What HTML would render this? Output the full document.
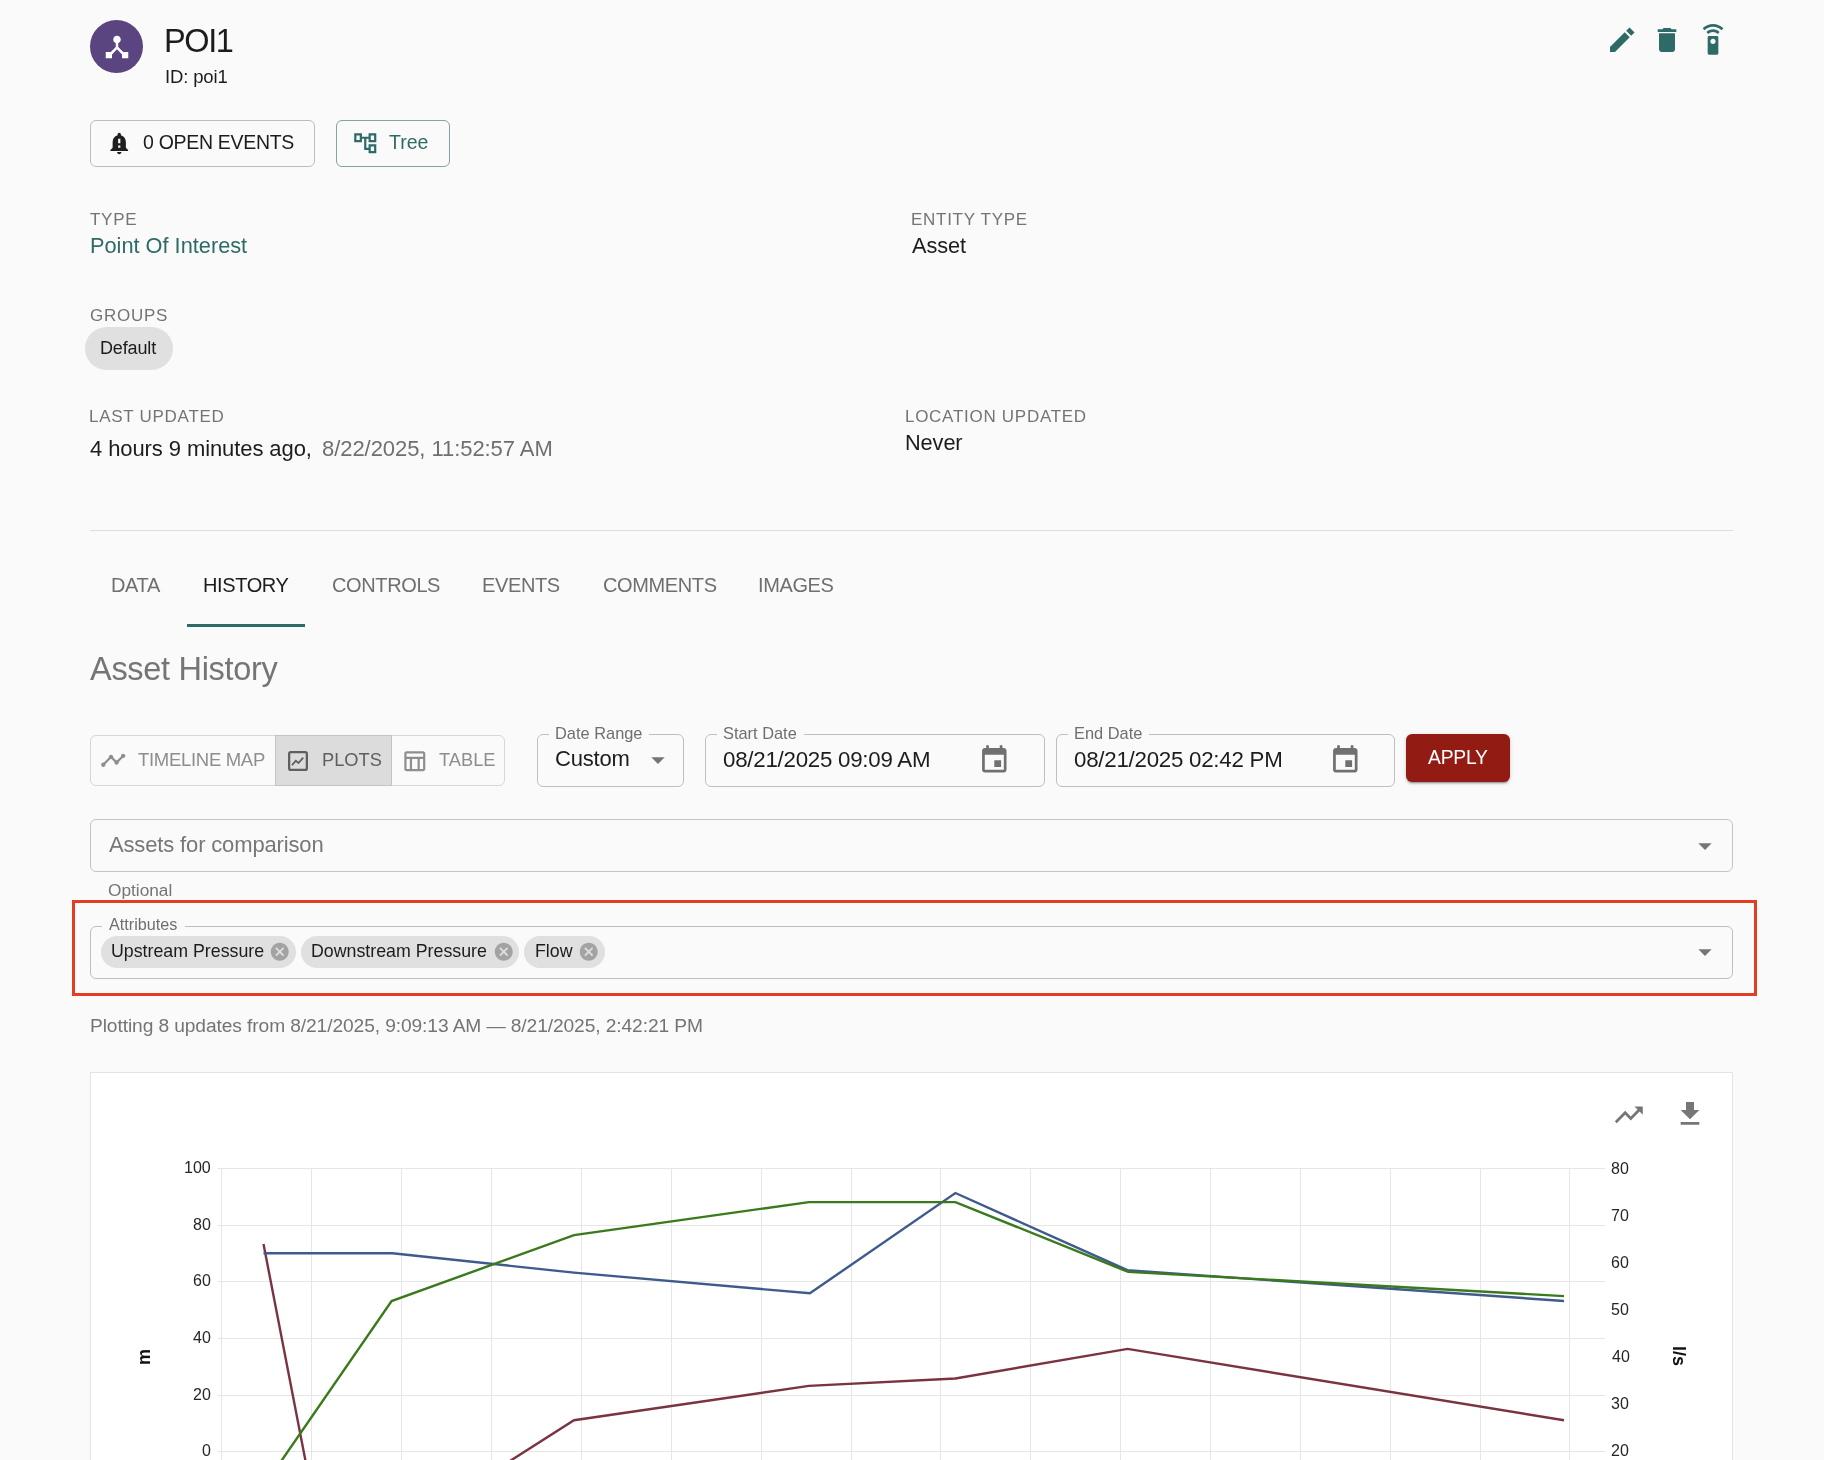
<!DOCTYPE html>
<html><head><meta charset="utf-8"><style>
html,body{margin:0;padding:0;background:#fafafa;width:1824px;height:1460px;overflow:hidden;position:relative;font-family:"Liberation Sans",sans-serif}
.t{position:absolute;will-change:transform;white-space:nowrap;line-height:1;font-family:"Liberation Sans",sans-serif}
.box{position:absolute;border:1px solid #c4c4c4;box-sizing:border-box}
</style></head><body>
<div style="position:absolute;left:90px;top:20px;width:53px;height:53px;border-radius:50%;background:#5b4580"></div><svg style="position:absolute;left:101.5px;top:31.5px" width="30" height="30" viewBox="0 0 24 24"><path fill="#fff" d="M17 16l-4-4V8.82C14.16 8.4 15 7.3 15 6c0-1.66-1.34-3-3-3S9 4.34 9 6c0 1.3.84 2.4 2 2.82V12l-4 4H3v5h5v-3.05l4-4.2 4 4.2V21h5v-5h-4z"/></svg><div class="t" style="left:163.93px;top:25.08px;font-size:32.5px;letter-spacing:-1.4px;color:#1c1c1c;">POI1</div>
<div class="t" style="left:164.89px;top:67.84px;font-size:18.5px;letter-spacing:-0.15px;color:#1c1c1c;">ID: poi1</div>
<svg style="position:absolute;left:1606px;top:24px" width="32" height="32" viewBox="0 0 24 24"><path fill="#2f6b66" d="M3 17.25V21h3.75L17.81 9.94l-3.75-3.75L3 17.25zM21.41 6.34l-3.75-3.75-2.53 2.54 3.75 3.75 2.53-2.54z"/></svg><svg style="position:absolute;left:1651px;top:24px" width="32" height="32" viewBox="0 0 24 24"><path fill="#2f6b66" d="M6 19c0 1.1.9 2 2 2h8c1.1 0 2-.9 2-2V7H6v12zM19 4h-3.5l-1-1h-5l-1 1H5v2h14V4z"/></svg><svg style="position:absolute;left:1697px;top:24px" width="32" height="32" viewBox="0 0 24 24"><path fill="#2f6b66" d="M15 9H9c-.55 0-1 .45-1 1v12c0 .55.45 1 1 1h6c.55 0 1-.45 1-1V10c0-.55-.45-1-1-1zm-3 6c-1.1 0-2-.9-2-2s.9-2 2-2 2 .9 2 2-.9 2-2 2zM7.05 6.05l1.41 1.41C9.37 6.56 10.62 6 12 6s2.63.56 3.54 1.46l1.41-1.41C15.68 4.78 13.93 4 12 4s-3.68.78-4.95 2.05zM12 0C8.96 0 6.21 1.23 4.22 3.22l1.41 1.41C7.26 3.01 9.51 2 12 2s4.74 1.01 6.36 2.64l1.41-1.41C17.790 1.23 15.04 0 12 0z"/></svg><div class="box" style="left:90px;top:120px;width:225px;height:47px;border-color:#bdbdbd;border-radius:6px"></div><svg style="position:absolute;left:106px;top:129.8px" width="26.5" height="26.5" viewBox="0 0 24 24"><path fill="#1f1f1f" d="M18 16v-5c0-3.07-1.64-5.64-4.5-6.32V4c0-.83-.67-1.5-1.5-1.5s-1.5.67-1.5 1.5v.68C7.630 5.36 6 7.92 6 11v5l-2 2v1h16v-1l-2-2zm-5 0h-2v-2h2v2zm0-4h-2V8h2v4zm-1 10c1.1 0 2-.9 2-2h-4c0 1.1.89 2 2 2z"/></svg><div class="t" style="left:142.84px;top:132.99px;font-size:19.5px;letter-spacing:-0.3px;color:#1c1c1c;">0 OPEN EVENTS</div>
<div class="box" style="left:336px;top:120px;width:114px;height:47px;border-color:#7fa5a1;border-radius:6px"></div><svg style="position:absolute;left:352px;top:130px" width="26.5" height="26.5" viewBox="0 0 24 24"><path fill="#2f6b66" d="M22 11V3h-7v3H9V3H2v8h7V8h2v10h4v3h7v-8h-7v3h-2V8h2v3h7zM7 9H4V5h3v4zm10 6h3v4h-3v-4zm0-10h3v4h-3V5z"/></svg><div class="t" style="left:389.06px;top:132.89px;font-size:19.5px;color:#2f6b66;">Tree</div>
<div class="t" style="left:89.92px;top:211.21px;font-size:17px;letter-spacing:0.72px;color:#747474;">TYPE</div>
<div class="t" style="left:89.82px;top:235.48px;font-size:21.75px;color:#2f6b66;">Point Of Interest</div>
<div class="t" style="left:910.61px;top:211.21px;font-size:17px;letter-spacing:0.72px;color:#747474;">ENTITY TYPE</div>
<div class="t" style="left:911.76px;top:235.08px;font-size:21.75px;letter-spacing:-0.1px;color:#1c1c1c;">Asset</div>
<div class="t" style="left:89.65px;top:307.21px;font-size:17px;letter-spacing:0.72px;color:#747474;">GROUPS</div>
<div style="position:absolute;left:85px;top:327px;width:88px;height:43px;border-radius:21.5px;background:#e0e0e0"></div><div class="t" style="left:100.22px;top:339.36px;font-size:18px;letter-spacing:-0.15px;color:#1c1c1c;">Default</div>
<div class="t" style="left:88.91px;top:408.41px;font-size:17px;letter-spacing:0.72px;color:#747474;">LAST UPDATED</div>
<div class="t" style="left:89.80px;top:438.37px;font-size:22px;letter-spacing:-0.09px;color:#1c1c1c;">4 hours 9 minutes ago,</div>
<div class="t" style="left:321.64px;top:438.37px;font-size:22px;letter-spacing:-0.06px;color:#6f6f6f;">8/22/2025, 11:52:57 AM</div>
<div class="t" style="left:905.11px;top:408.01px;font-size:17px;letter-spacing:0.72px;color:#747474;">LOCATION UPDATED</div>
<div class="t" style="left:905.12px;top:432.08px;font-size:21.75px;letter-spacing:-0.1px;color:#1c1c1c;">Never</div>
<div style="position:absolute;left:90px;top:530px;width:1643px;height:1px;background:#dedede"></div><div class="t" style="left:110.66px;top:574.77px;font-size:20px;letter-spacing:-0.38px;color:#6f6f6f;">DATA</div>
<div class="t" style="left:202.66px;top:574.77px;font-size:20px;letter-spacing:-0.38px;color:#1c1c1c;">HISTORY</div>
<div class="t" style="left:331.58px;top:574.77px;font-size:20px;letter-spacing:-0.38px;color:#6f6f6f;">CONTROLS</div>
<div class="t" style="left:482.16px;top:574.77px;font-size:20px;letter-spacing:-0.38px;color:#6f6f6f;">EVENTS</div>
<div class="t" style="left:602.58px;top:574.77px;font-size:20px;letter-spacing:-0.38px;color:#6f6f6f;">COMMENTS</div>
<div class="t" style="left:758.05px;top:574.77px;font-size:20px;letter-spacing:-0.38px;color:#6f6f6f;">IMAGES</div>
<div style="position:absolute;left:187px;top:624px;width:118px;height:3px;background:#2f6b66"></div><div class="t" style="left:90.44px;top:653.48px;font-size:32.5px;letter-spacing:-0.3px;color:#757575;">Asset History</div>
<div class="box" style="left:90px;top:735px;width:415px;height:51px;border-color:#d6d6d6;border-radius:6px"></div><div style="position:absolute;left:275px;top:735px;width:117px;height:51px;background:#dcdcdc;border:1px solid #c4c4c4;box-sizing:border-box"></div><svg style="position:absolute;left:100.2px;top:747.2px" width="26.5" height="26.5" viewBox="0 0 24 24"><path fill="#8e8e8e" d="M23 8c0 1.1-.9 2-2 2-.18 0-.35-.02-.51-.07l-3.56 3.55c.05.16.07.34.07.52 0 1.1-.9 2-2 2s-2-.9-2-2c0-.18.02-.36.07-.52l-2.55-2.55c-.16.05-.34.07-.52.07s-.36-.02-.52-.07l-4.55 4.56c.05.16.07.33.07.51 0 1.1-.9 2-2 2s-2-.9-2-2 .9-2 2-2c.18 0 .35.02.51.07l4.56-4.55C8.02 9.36 8 9.18 8 9c0-1.1.9-2 2-2s2 .9 2 2c0 .18-.02.36-.07.52l2.55 2.55c.16-.05.34-.07.52-.07s.36.02.52.07l3.55-3.56C19.02 8.35 19 8.18 19 8c0-1.1.9-2 2-2s2 .9 2 2z"/></svg><div class="t" style="left:137.58px;top:750.64px;font-size:18.5px;letter-spacing:-0.3px;color:#8e8e8e;">TIMELINE MAP</div>
<svg style="position:absolute;left:288.3px;top:751.2px" width="20" height="20" viewBox="0 0 21 21"><rect x="1.2" y="1.2" width="18.6" height="18.6" rx="1.8" fill="none" stroke="#5f5f5f" stroke-width="2.4"/><polyline points="4.2,14.8 8.2,10.2 11,12.6 16,7" fill="none" stroke="#5f5f5f" stroke-width="1.9"/></svg><div class="t" style="left:322.20px;top:750.61px;font-size:18.3px;color:#5f5f5f;">PLOTS</div>
<svg style="position:absolute;left:400.5px;top:747.5px" width="26.5" height="26.5" viewBox="0 0 24 24"><path fill="#8e8e8e" d="M20 3H5c-1.1 0-2 .9-2 2v14c0 1.1.9 2 2 2h15c1.1 0 2-.9 2-2V5c0-1.1-.9-2-2-2zm0 2v3H5V5h15zm-5 14h-5v-9h5v9zM5 10h3v9H5v-9zm12 9v-9h3v9h-3z"/></svg><div class="t" style="left:438.59px;top:750.61px;font-size:18.3px;color:#8e8e8e;">TABLE</div>
<div class="box" style="left:537px;top:734.3px;width:147px;height:52.5px;border-color:#bfbfbf;border-radius:6px"></div><div style="position:absolute;left:549px;top:733.3px;width:100px;height:4px;background:#fafafa"></div><div class="t" style="left:555.25px;top:725.31px;font-size:16.4px;color:#6f6f6f;">Date Range</div>
<div class="t" style="left:555.28px;top:748.37px;font-size:22px;letter-spacing:-0.2px;color:#1c1c1c;">Custom</div>
<svg style="position:absolute;left:641.9px;top:743.6px" width="32" height="32" viewBox="0 0 24 24"><path fill="#767676" d="M7 10l5 5 5-5z"/></svg><div class="box" style="left:705px;top:734.3px;width:340px;height:52.5px;border-color:#bfbfbf;border-radius:6px"></div><div style="position:absolute;left:716.7px;top:733.3px;width:87.29999999999995px;height:4px;background:#fafafa"></div><div class="t" style="left:723.46px;top:725.31px;font-size:16.4px;color:#6f6f6f;">Start Date</div>
<div class="t" style="left:723.33px;top:748.62px;font-size:22.3px;letter-spacing:-0.25px;color:#1c1c1c;">08/21/2025 09:09 AM</div>
<svg style="position:absolute;left:977.7px;top:744.4px" width="32.6" height="32.6" viewBox="0 0 24 24"><path fill="#707070" d="M17 12h-5v5h5v-5zM16 1v2H8V1H6v2H5c-1.11 0-1.99.9-1.99 2L3 19c0 1.1.89 2 2 2h14c1.1 0 2-.9 2-2V5c0-1.1-.9-2-2-2h-1V1h-2zm3 18H5V8h14v11z"/></svg><div class="box" style="left:1056px;top:734.3px;width:339px;height:52.5px;border-color:#bfbfbf;border-radius:6px"></div><div style="position:absolute;left:1067.5px;top:733.3px;width:81.5px;height:4px;background:#fafafa"></div><div class="t" style="left:1073.65px;top:725.31px;font-size:16.4px;color:#6f6f6f;">End Date</div>
<div class="t" style="left:1074.13px;top:748.62px;font-size:22.3px;letter-spacing:-0.25px;color:#1c1c1c;">08/21/2025 02:42 PM</div>
<svg style="position:absolute;left:1329px;top:744.4px" width="32.6" height="32.6" viewBox="0 0 24 24"><path fill="#707070" d="M17 12h-5v5h5v-5zM16 1v2H8V1H6v2H5c-1.11 0-1.99.9-1.99 2L3 19c0 1.1.89 2 2 2h14c1.1 0 2-.9 2-2V5c0-1.1-.9-2-2-2h-1V1h-2zm3 18H5V8h14v11z"/></svg><div style="position:absolute;left:1406px;top:734px;width:104px;height:48px;border-radius:6px;background:#921c13;box-shadow:0 3px 1px -2px rgba(0,0,0,0.2),0 2px 2px 0 rgba(0,0,0,0.14),0 1px 5px 0 rgba(0,0,0,0.12)"></div><div class="t" style="left:1428.16px;top:748.36px;font-size:19.3px;letter-spacing:-0.2px;color:#ffffff;">APPLY</div>
<div class="box" style="left:90px;top:819px;width:1643px;height:53px;border-color:#c4c4c4;border-radius:6px"></div><div class="t" style="left:109.16px;top:834.17px;font-size:22px;letter-spacing:-0.15px;color:#777777;">Assets for comparison</div>
<svg style="position:absolute;left:1689.2px;top:829.5px" width="32" height="32" viewBox="0 0 24 24"><path fill="#767676" d="M7 10l5 5 5-5z"/></svg><div class="t" style="left:108.38px;top:881.59px;font-size:17.25px;color:#757575;">Optional</div>
<div style="position:absolute;left:71.5px;top:900px;width:1685px;height:96px;border:3px solid #e43d25;box-sizing:border-box"></div><div class="box" style="left:90px;top:926.4px;width:1643px;height:52.5px;border-color:#bfbfbf;border-radius:6px"></div><div style="position:absolute;left:101.8px;top:925.4px;width:83.39999999999999px;height:4px;background:#fafafa"></div><div class="t" style="left:109.47px;top:916.08px;font-size:16.2px;color:#6f6f6f;">Attributes</div>
<svg style="position:absolute;left:1689.2px;top:935.7px" width="32" height="32" viewBox="0 0 24 24"><path fill="#767676" d="M7 10l5 5 5-5z"/></svg><div style="position:absolute;left:101.4px;top:936px;width:194.6px;height:32px;border-radius:16px;background:#e0e0e0"></div><div class="t" style="left:110.63px;top:943.33px;font-size:17.8px;color:#1c1c1c;">Upstream Pressure</div>
<svg style="position:absolute;left:268.8px;top:941px" width="21.5" height="21.5" viewBox="0 0 24 24"><path fill="#a3a3a3" d="M12 2C6.47 2 2 6.47 2 12s4.47 10 10 10 10-4.47 10-10S17.53 2 12 2zm5 13.59L15.59 17 12 13.41 8.41 17 7 15.59 10.59 12 7 8.41 8.41 7 12 10.59 15.59 7 17 8.41 13.41 12 17 15.59z"/></svg><div style="position:absolute;left:301px;top:936px;width:217.7px;height:32px;border-radius:16px;background:#e0e0e0"></div><div class="t" style="left:311.04px;top:943.33px;font-size:17.8px;color:#1c1c1c;">Downstream Pressure</div>
<svg style="position:absolute;left:492.8px;top:941px" width="21.5" height="21.5" viewBox="0 0 24 24"><path fill="#a3a3a3" d="M12 2C6.47 2 2 6.47 2 12s4.47 10 10 10 10-4.47 10-10S17.53 2 12 2zm5 13.59L15.59 17 12 13.41 8.41 17 7 15.59 10.59 12 7 8.41 8.41 7 12 10.59 15.59 7 17 8.41 13.41 12 17 15.59z"/></svg><div style="position:absolute;left:524px;top:936px;width:80.6px;height:32px;border-radius:16px;background:#e0e0e0"></div><div class="t" style="left:534.74px;top:943.33px;font-size:17.8px;color:#1c1c1c;">Flow</div>
<svg style="position:absolute;left:577.8px;top:941px" width="21.5" height="21.5" viewBox="0 0 24 24"><path fill="#a3a3a3" d="M12 2C6.47 2 2 6.47 2 12s4.47 10 10 10 10-4.47 10-10S17.53 2 12 2zm5 13.59L15.59 17 12 13.41 8.41 17 7 15.59 10.59 12 7 8.41 8.41 7 12 10.59 15.59 7 17 8.41 13.41 12 17 15.59z"/></svg><div class="t" style="left:90.33px;top:1016.14px;font-size:19.2px;letter-spacing:-0.1px;color:#747474;">Plotting 8 updates from 8/21/2025, 9:09:13 AM — 8/21/2025, 2:42:21 PM</div>
<div style="position:absolute;left:90px;top:1072px;width:1643px;height:400px;background:#fff;border:1px solid #e3e3e3;box-sizing:border-box"></div><svg style="position:absolute;left:1611.5px;top:1097.5px" width="33.6" height="33.6" viewBox="0 0 24 24"><path fill="#767676" d="M16 6l2.29 2.29-4.88 4.88-4-4L2 16.59 3.41 18l6-6 4 4 6.3-6.29L22 12V6z"/></svg><svg style="position:absolute;left:1673.8px;top:1097.5px" width="32" height="32" viewBox="0 0 24 24"><path fill="#767676" d="M19 9h-4V3H9v6H5l7 7 7-7zM5 18v2h14v-2H5z"/></svg><svg style="position:absolute;left:0;top:0" width="1824" height="1460" viewBox="0 0 1824 1460"><defs><clipPath id="pc"><rect x="91" y="1073" width="1641" height="387"/></clipPath></defs><g clip-path="url(#pc)"><line x1="218" y1="1168.5" x2="1605" y2="1168.5" stroke="#e6e6e6" stroke-width="1"/><line x1="218" y1="1225.5" x2="1605" y2="1225.5" stroke="#e6e6e6" stroke-width="1"/><line x1="218" y1="1281.5" x2="1605" y2="1281.5" stroke="#e6e6e6" stroke-width="1"/><line x1="218" y1="1338.5" x2="1605" y2="1338.5" stroke="#e6e6e6" stroke-width="1"/><line x1="218" y1="1395.5" x2="1605" y2="1395.5" stroke="#e6e6e6" stroke-width="1"/><line x1="218" y1="1451.5" x2="1605" y2="1451.5" stroke="#e6e6e6" stroke-width="1"/><line x1="221.5" y1="1168" x2="221.5" y2="1470" stroke="#e6e6e6" stroke-width="1"/><line x1="311.5" y1="1168" x2="311.5" y2="1470" stroke="#e6e6e6" stroke-width="1"/><line x1="401.5" y1="1168" x2="401.5" y2="1470" stroke="#e6e6e6" stroke-width="1"/><line x1="491.5" y1="1168" x2="491.5" y2="1470" stroke="#e6e6e6" stroke-width="1"/><line x1="581.5" y1="1168" x2="581.5" y2="1470" stroke="#e6e6e6" stroke-width="1"/><line x1="671.5" y1="1168" x2="671.5" y2="1470" stroke="#e6e6e6" stroke-width="1"/><line x1="761.5" y1="1168" x2="761.5" y2="1470" stroke="#e6e6e6" stroke-width="1"/><line x1="851.5" y1="1168" x2="851.5" y2="1470" stroke="#e6e6e6" stroke-width="1"/><line x1="940.5" y1="1168" x2="940.5" y2="1470" stroke="#e6e6e6" stroke-width="1"/><line x1="1030.5" y1="1168" x2="1030.5" y2="1470" stroke="#e6e6e6" stroke-width="1"/><line x1="1120.5" y1="1168" x2="1120.5" y2="1470" stroke="#e6e6e6" stroke-width="1"/><line x1="1210.5" y1="1168" x2="1210.5" y2="1470" stroke="#e6e6e6" stroke-width="1"/><line x1="1300.5" y1="1168" x2="1300.5" y2="1470" stroke="#e6e6e6" stroke-width="1"/><line x1="1390.5" y1="1168" x2="1390.5" y2="1470" stroke="#e6e6e6" stroke-width="1"/><line x1="1480.5" y1="1168" x2="1480.5" y2="1470" stroke="#e6e6e6" stroke-width="1"/><line x1="1569.5" y1="1168" x2="1569.5" y2="1470" stroke="#e6e6e6" stroke-width="1"/><polyline fill="none" stroke="#7a3441" stroke-width="2.4" stroke-linejoin="miter" points="263.5,1244 328,1577 574,1420.2 808.9,1385.9 955.4,1378.5 1127.6,1348.9 1564,1420.2"/><polyline fill="none" stroke="#3f5b8b" stroke-width="2.4" stroke-linejoin="miter" points="263.5,1253.3 392.4,1253.3 574,1272.6 809.9,1293.3 955.4,1193 1127.4,1270.2 1564,1301"/><polyline fill="none" stroke="#3a7a1c" stroke-width="2.4" stroke-linejoin="miter" points="264,1486 391.6,1301.1 574,1235.1 808.9,1202.1 955.4,1202.1 1128.2,1271.9 1564,1296.1"/></g></svg><div class="t" style="right:1613px;top:1159.95px;font-size:16px;color:#262626">100</div><div class="t" style="right:1613px;top:1216.60px;font-size:16px;color:#262626">80</div><div class="t" style="right:1613px;top:1273.25px;font-size:16px;color:#262626">60</div><div class="t" style="right:1613px;top:1329.90px;font-size:16px;color:#262626">40</div><div class="t" style="right:1613px;top:1386.55px;font-size:16px;color:#262626">20</div><div class="t" style="right:1613px;top:1443.20px;font-size:16px;color:#262626">0</div><div class="t" style="left:1611.20px;top:1160.65px;font-size:16px;color:#262626;">80</div>
<div class="t" style="left:1611.08px;top:1207.65px;font-size:16px;color:#262626;">70</div>
<div class="t" style="left:1611.09px;top:1254.65px;font-size:16px;color:#262626;">60</div>
<div class="t" style="left:1611.26px;top:1301.65px;font-size:16px;color:#262626;">50</div>
<div class="t" style="left:1611.53px;top:1348.65px;font-size:16px;color:#262626;">40</div>
<div class="t" style="left:1611.29px;top:1395.65px;font-size:16px;color:#262626;">30</div>
<div class="t" style="left:1611.10px;top:1442.65px;font-size:16px;color:#262626;">20</div>
<div class="t" style="left:135px;top:1365px;font-size:18px;font-weight:700;color:#111;transform-origin:0 0;transform:rotate(-90deg)">m</div><div class="t" style="left:1688px;top:1346px;font-size:18px;font-weight:700;color:#111;transform-origin:0 0;transform:rotate(90deg)">l/s</div>
</body></html>
